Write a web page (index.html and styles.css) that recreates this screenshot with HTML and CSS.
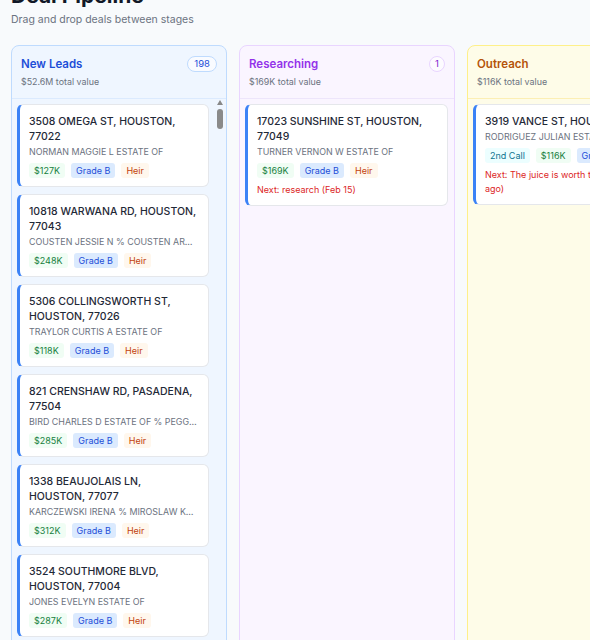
FILE: index.html
```html
<!DOCTYPE html>
<html>
<head>
<meta charset="utf-8">
<link rel="stylesheet" href="styles.css">
</head>
<body>
<div class="page">
  <header class="head">
    <h1 class="title">Deal Pipeline</h1>
    <p class="sub">Drag and drop deals between stages</p>
  </header>
  <div class="board">
    <section class="col col-blue">
      <div class="col-head">
        <div class="col-info">
          <div class="col-title">New Leads</div>
          <div class="col-total">$52.6M total value</div>
        </div>
        <span class="badge">198</span>
      </div>
      <div class="list list-scroll">
        <div class="card"><div class="addr">3508 OMEGA ST, HOUSTON, 77022</div><div class="owner">NORMAN MAGGIE L ESTATE OF</div><div class="chips"><span class="chip green">$127K</span><span class="chip blue">Grade B</span><span class="chip orange">Heir</span></div></div>
        <div class="card"><div class="addr">10818 WARWANA RD, HOUSTON, 77043</div><div class="owner">COUSTEN JESSIE N % COUSTEN ARTHUR</div><div class="chips"><span class="chip green">$248K</span><span class="chip blue">Grade B</span><span class="chip orange">Heir</span></div></div>
        <div class="card"><div class="addr">5306 COLLINGSWORTH ST, HOUSTON, 77026</div><div class="owner">TRAYLOR CURTIS A ESTATE OF</div><div class="chips"><span class="chip green">$118K</span><span class="chip blue">Grade B</span><span class="chip orange">Heir</span></div></div>
        <div class="card"><div class="addr">821 CRENSHAW RD, PASADENA, 77504</div><div class="owner">BIRD CHARLES D ESTATE OF % PEGGY BIRD</div><div class="chips"><span class="chip green">$285K</span><span class="chip blue">Grade B</span><span class="chip orange">Heir</span></div></div>
        <div class="card"><div class="addr">1338 BEAUJOLAIS LN, HOUSTON, 77077</div><div class="owner">KARCZEWSKI IRENA % MIROSLAW KARCZEWSKI</div><div class="chips"><span class="chip green">$312K</span><span class="chip blue">Grade B</span><span class="chip orange">Heir</span></div></div>
        <div class="card"><div class="addr">3524 SOUTHMORE BLVD, HOUSTON, 77004</div><div class="owner">JONES EVELYN ESTATE OF</div><div class="chips"><span class="chip green">$287K</span><span class="chip blue">Grade B</span><span class="chip orange">Heir</span></div></div>
        <div class="card"><div class="addr">7710 BELLFORT ST, HOUSTON, 77061</div><div class="owner">GARCIA MARIA ESTATE OF</div><div class="chips"><span class="chip green">$164K</span><span class="chip blue">Grade B</span><span class="chip orange">Heir</span></div></div>
      </div>
      <div class="fake-scroll"><span class="fs-arrow"></span><span class="fs-thumb"></span></div>
    </section>
    <section class="col col-purple">
      <div class="col-head">
        <div class="col-info">
          <div class="col-title">Researching</div>
          <div class="col-total">$169K total value</div>
        </div>
        <span class="badge">1</span>
      </div>
      <div class="list">
        <div class="card"><div class="addr">17023 SUNSHINE ST, HOUSTON, 77049</div><div class="owner">TURNER VERNON W ESTATE OF</div><div class="chips"><span class="chip green">$169K</span><span class="chip blue">Grade B</span><span class="chip orange">Heir</span></div><div class="next">Next: research (Feb 15)</div></div>
      </div>
    </section>
    <section class="col col-amber">
      <div class="col-head">
        <div class="col-info">
          <div class="col-title">Outreach</div>
          <div class="col-total">$116K total value</div>
        </div>
        <span class="badge">1</span>
      </div>
      <div class="list">
        <div class="card"><div class="addr nowrap">3919 VANCE ST, HOUSTON, 77026</div><div class="owner">RODRIGUEZ JULIAN ESTATE OF</div><div class="chips"><span class="chip cyan">2nd Call</span><span class="chip green">$116K</span><span class="chip blue">Grade B</span><span class="chip orange">Heir</span></div><div class="next">Next: The juice is worth the wait (3 days ago)</div></div>
      </div>
    </section>
  </div>
</div>
</body>
</html>
```
FILE: styles.css
```css
html { overflow: hidden; }
body {
  margin: 0;
  background: #f8fafc;
  font-family: Inter, "Noto Sans", sans-serif;
  color: #111827;
}
.page { padding: 0 11px; }
.head { margin-top: -18px; }
.title {
  margin: 0;
  font-size: 21px;
  line-height: 28px;
  font-weight: 700;
  color: #111827;
}
.sub {
  margin: 3px 0 0;
  font-size: 10.5px;
  line-height: 14px;
  color: #6b7280;
}
.board {
  display: flex;
  gap: 12px;
  margin-top: 18px;
  width: 900px;
}
.col {
  position: relative;
  flex: 0 0 216px;
  box-sizing: border-box;
  height: 620px;
  border: 1px solid;
  border-radius: 8px;
  display: flex;
  flex-direction: column;
  overflow: hidden;
}
.col-blue { background: #eff6ff; border-color: #bfdbfe; }
.col-purple { background: #faf5ff; border-color: #e9d5ff; }
.col-amber { background: #fefce8; border-color: #fef08a; }
.col-head {
  display: flex;
  justify-content: space-between;
  align-items: flex-start;
  padding: 9px 9px 9px 9px;
  border-bottom: 1px solid;
}
.col-blue .col-head { border-color: #dbeafe; }
.col-purple .col-head { border-color: #ede5fb; }
.col-amber .col-head { border-color: #fcefb4; }
.col-title {
  font-size: 11.5px;
  line-height: 18px;
  font-weight: 600;
}
.col-blue .col-title { color: #1d4ed8; }
.col-purple .col-title { color: #9333ea; }
.col-amber .col-title { color: #b45309; }
.col-total {
  margin-top: 2px;
  font-size: 8.9px;
  line-height: 14px;
  color: #6b7280;
}
.badge {
  margin-top: 1px;
  min-width: 16px;
  height: 16px;
  box-sizing: border-box;
  padding: 0 6px;
  border: 1px solid;
  border-radius: 9px;
  background: rgba(255,255,255,0.6);
  font-size: 9.5px;
  line-height: 14px;
  text-align: center;
}
.col-blue .badge { border-color: #bfdbfe; color: #1d4ed8; }
.col-purple .badge { border-color: #e9d5ff; color: #7e22ce; padding: 0 4px; }
.col-amber .badge { border-color: #fde68a; color: #b45309; padding: 0 4px; }
.list {
  flex: 1;
  overflow: hidden;
  padding: 5px 6px 6px 5px;
  display: flex;
  flex-direction: column;
  gap: 7px;
}
.list-scroll { padding-right: 17px; }
.fake-scroll {
  position: absolute;
  top: 54px;
  right: 2px;
  width: 8px;
}
.fs-arrow {
  display: block;
  width: 0;
  height: 0;
  margin: 0 auto;
  border-left: 3.5px solid transparent;
  border-right: 3.5px solid transparent;
  border-bottom: 5px solid #888;
}
.fs-thumb {
  display: block;
  width: 6px;
  height: 20px;
  margin: 4px auto 0;
  border-radius: 3px;
  background: #8a8a8a;
}
.card {
  flex: 0 0 auto;
  background: #fff;
  border: 1px solid #e5e7eb;
  border-left: 3px solid #3b82f6;
  border-radius: 6px;
  padding: 9px 10px 8px 9px;
}
.addr {
  font-size: 10.5px;
  line-height: 15px;
  font-weight: 500;
  color: #1f2937;
}
.nowrap { white-space: nowrap; overflow: hidden; }
.owner {
  font-size: 8.9px;
  line-height: 15px;
  color: #6b7280;
  white-space: nowrap;
  overflow: hidden;
  text-overflow: ellipsis;
}
.chips {
  display: flex;
  gap: 6px;
  margin-top: 4px;
  white-space: nowrap;
}
.chip {
  font-size: 9px;
  line-height: 11px;
  padding: 2px 5px;
  border-radius: 3px;
}
.green { background: #f0fdf4; color: #15803d; }
.blue { background: #dbeafe; color: #1d4ed8; }
.orange { background: #fff7ed; color: #c2410c; }
.cyan { background: #ecfeff; color: #0e7490; }
.next {
  margin-top: 5px;
  font-size: 9px;
  line-height: 14px;
  color: #dc2626;
}
```
